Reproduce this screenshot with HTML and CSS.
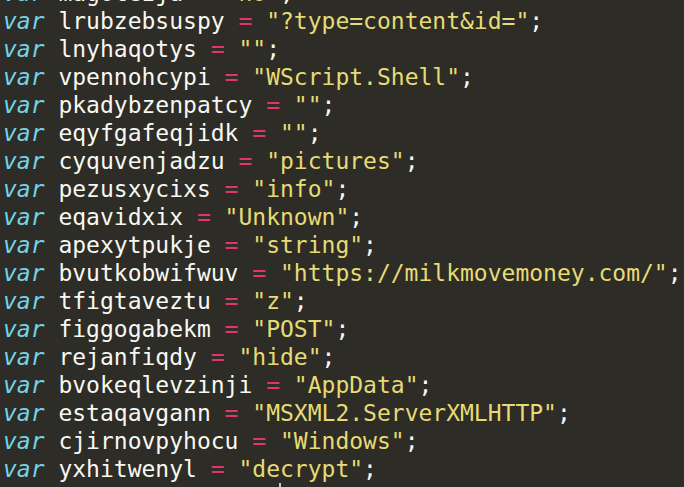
FILE: index.html
```html
<!DOCTYPE html>
<html>
<head>
<meta charset="utf-8">
<link rel="stylesheet" href="styles.css">
</head>
<body>
<div class="code">
<div class="line"><span class="kw">var</span> <span class="id">magotezja</span> <span class="op">=</span> <span class="str">"no"</span><span class="pn">;</span></div>
<div class="line"><span class="kw">var</span> <span class="id">lrubzebsuspy</span> <span class="op">=</span> <span class="str">"?type=content&amp;id="</span><span class="pn">;</span></div>
<div class="line"><span class="kw">var</span> <span class="id">lnyhaqotys</span> <span class="op">=</span> <span class="str">""</span><span class="pn">;</span></div>
<div class="line"><span class="kw">var</span> <span class="id">vpennohcypi</span> <span class="op">=</span> <span class="str">"WScript.Shell"</span><span class="pn">;</span></div>
<div class="line"><span class="kw">var</span> <span class="id">pkadybzenpatcy</span> <span class="op">=</span> <span class="str">""</span><span class="pn">;</span></div>
<div class="line"><span class="kw">var</span> <span class="id">eqyfgafeqjidk</span> <span class="op">=</span> <span class="str">""</span><span class="pn">;</span></div>
<div class="line"><span class="kw">var</span> <span class="id">cyquvenjadzu</span> <span class="op">=</span> <span class="str">"pictures"</span><span class="pn">;</span></div>
<div class="line"><span class="kw">var</span> <span class="id">pezusxycixs</span> <span class="op">=</span> <span class="str">"info"</span><span class="pn">;</span></div>
<div class="line"><span class="kw">var</span> <span class="id">eqavidxix</span> <span class="op">=</span> <span class="str">"Unknown"</span><span class="pn">;</span></div>
<div class="line"><span class="kw">var</span> <span class="id">apexytpukje</span> <span class="op">=</span> <span class="str">"string"</span><span class="pn">;</span></div>
<div class="line"><span class="kw">var</span> <span class="id">bvutkobwifwuv</span> <span class="op">=</span> <span class="str">"https://milkmovemoney.com/"</span><span class="pn">;</span></div>
<div class="line"><span class="kw">var</span> <span class="id">tfigtaveztu</span> <span class="op">=</span> <span class="str">"z"</span><span class="pn">;</span></div>
<div class="line"><span class="kw">var</span> <span class="id">figgogabekm</span> <span class="op">=</span> <span class="str">"POST"</span><span class="pn">;</span></div>
<div class="line"><span class="kw">var</span> <span class="id">rejanfiqdy</span> <span class="op">=</span> <span class="str">"hide"</span><span class="pn">;</span></div>
<div class="line"><span class="kw">var</span> <span class="id">bvokeqlevzinji</span> <span class="op">=</span> <span class="str">"AppData"</span><span class="pn">;</span></div>
<div class="line"><span class="kw">var</span> <span class="id">estaqavgann</span> <span class="op">=</span> <span class="str">"MSXML2.ServerXMLHTTP"</span><span class="pn">;</span></div>
<div class="line"><span class="kw">var</span> <span class="id">cjirnovpyhocu</span> <span class="op">=</span> <span class="str">"Windows"</span><span class="pn">;</span></div>
<div class="line"><span class="kw">var</span> <span class="id">yxhitwenyl</span> <span class="op">=</span> <span class="str">"decrypt"</span><span class="pn">;</span></div>
<div class="line cursor-line"><span class="indent">                    </span><span class="cursor"></span></div>
</div>
</body>
</html>
```
FILE: styles.css
```css
html, body {
  margin: 0;
  padding: 0;
  background: #2d2c26;
  overflow: hidden;
  height: 100%;
}

.code {
  margin: -21px 0 0 0;
  padding: 0 0 0 3px;
  font-family: "DejaVu Sans Mono", monospace;
  font-size: 23px;
  line-height: 28px;
  color: #f8f8f2;
}

.line {
  white-space: pre;
  height: 28px;
}

.cursor-line {
  display: flex;
  align-items: flex-start;
}

.cursor {
  display: block;
  width: 2px;
  height: 24px;
  margin-top: 0;
  margin-left: -1px;
  background: #c9c9c2;
}

.kw {
  color: #74d3ec;
  font-style: italic;
}

.id {
  color: #f8f8f2;
}

.op {
  color: #e6336f;
}

.str {
  color: #e6db74;
}

.pn {
  color: #f8f8f2;
}
```
